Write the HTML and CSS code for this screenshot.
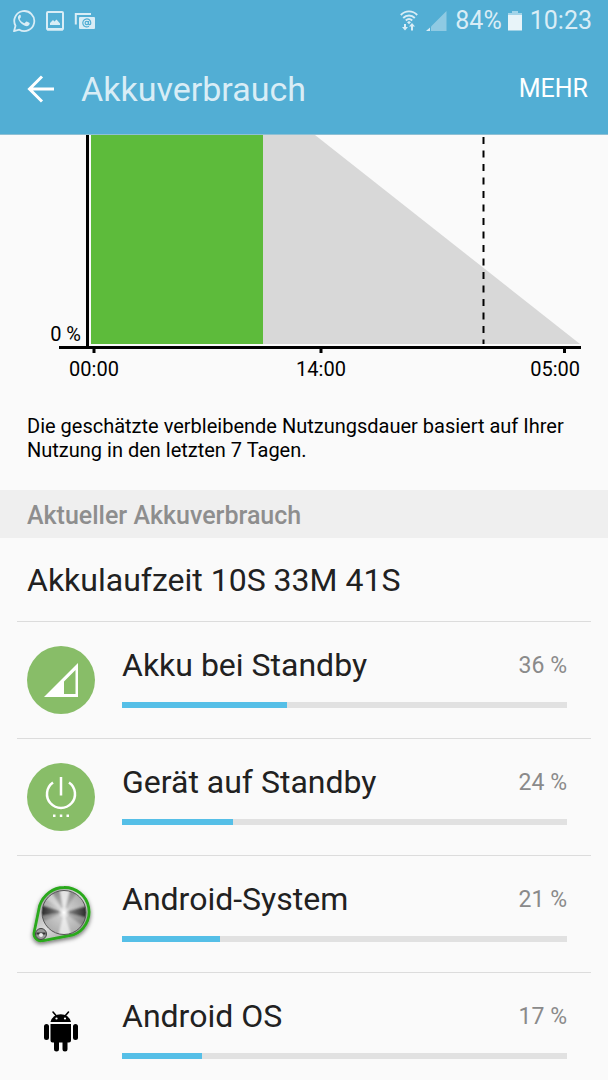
FILE: index.html
```html
<!DOCTYPE html>
<html lang="de">
<head>
<meta charset="utf-8">
<meta name="viewport" content="width=device-width, initial-scale=1">
<title>Akkuverbrauch</title>
<link rel="stylesheet" href="styles.css">
</head>
<body>
<div class="screen">
  <header class="top">
    <div class="status">
      <div class="status-group notifications">
        <svg width="24" height="24" viewBox="0 0 24 24" aria-hidden="true">
          <path d="M2 22.2 3.5 16.8A10 10 0 1 1 7.3 20.7Z" fill="none" stroke="currentColor" stroke-width="1.8" stroke-linejoin="round"/>
          <path d="M8.8 6.5c-.4-.8-.9-.8-1.500-.5-1.100.8-1.600 2.100-1.200 3.600.8 3 4 6.500 7.500 7.500 2 .5 3.600-.5 4-2 .2-.8.1-1.200-.3-1.400l-2.500-1.200c-.5-.2-.8 0-1.100.4l-.9 1.100c-.3.300-.6.300-1 .1-1.900-.9-3.200-2.100-4.100-3.800-.2-.4-.1-.6.200-.9.500-.5 1-1.100.9-1.500z" fill="currentColor"/>
        </svg>
        <svg width="20" height="22" viewBox="0 0 20 22" aria-hidden="true">
          <rect x="2" y="2" width="16" height="17.500" rx="1" fill="none" stroke="currentColor" stroke-width="2"/>
          <path d="M2 18h16v2.500H2zM5 15v-2l3-3 1.500 1.500 2-2 3.500 4V15z" fill="currentColor"/>
        </svg>
        <svg width="22" height="18" viewBox="0 0 22 18" aria-hidden="true">
          <path d="M1.800 12.500V2H17" fill="none" stroke="currentColor" stroke-width="2"/>
          <rect x="5" y="5" width="16" height="12" rx="1" fill="currentColor"/>
          <circle cx="12.800" cy="11" r="1.700" class="cutout"/>
          <path d="M14.500 9v2.500c0 1.800 2.300 1.600 2.300-.6a4 4 0 1 0-1.800 3.400" class="cutout"/>
        </svg>
      </div>
      <div class="status-group">
        <svg class="wifi" width="18" height="21" viewBox="0 0 18 21" aria-hidden="true">
          <path d="M0.800 5C5.500.2 12.500.2 17.200 5M3.200 8C6.500 4.700 11.500 4.700 14.800 8M5.800 10.500c1.900-1.800 4.500-1.800 6.400 0" fill="none" stroke="currentColor" stroke-width="1.900"/>
          <path d="m7 12.300 2-1.300 2 1.300-2 2zM6 14v3h2l-3 3.500L2 17h2v-3zM11 20.500v-4H9l3-3.500 3 3.500h-2v4z" fill="currentColor"/>
        </svg>
        <svg class="signal" width="21" height="20" viewBox="0 0 21 20" aria-hidden="true">
          <path d="M5 15.500 20.500 0v20H5z" fill="currentColor" opacity=".45"/>
          <path d="M0 20 4 16.500V20z" fill="currentColor"/>
        </svg>
        <span>84%</span>
        <svg class="battery" width="14" height="21" viewBox="0 0 14 21" aria-hidden="true">
          <path d="M0 3h4V1h6v2h4v3H0z" fill="currentColor" opacity=".6"/>
          <path d="M0 5h14v15.500H0z" fill="#e8f4f9"/>
        </svg>
        <time>10:23</time>
      </div>
    </div>
    <div class="bar">
      <button class="back" type="button" aria-label="Zurück">
        <svg width="28" height="28" viewBox="0 0 28 28" aria-hidden="true"><path d="M15 1.500 2.500 14 15 26.500M2.500 14H27" fill="none" stroke="currentColor" stroke-width="3"/></svg>
      </button>
      <h1 class="title">Akkuverbrauch</h1>
      <button class="more" type="button">MEHR</button>
    </div>
  </header>

  <main class="content">
    <svg class="chart" viewBox="0 0 608 265" role="img" aria-label="Akkustand im Zeitverlauf">
      <path d="M263 0H315L580 209H263z" fill="#d8d8d8"/>
      <rect x="91" y="0" width="172" height="209" fill="#5dbb3b"/>
      <rect x="86" y="0" width="3" height="212" fill="#000"/>
      <path d="M483.500 2V209" stroke="#000" stroke-width="2" stroke-dasharray="7 6.500"/>
      <path d="M59 212.500H581" stroke="#000" stroke-width="3"/>
      <path d="M94 213v5M321 213v5M564.500 213v5" stroke="#000" stroke-width="3"/>
      <g class="chart-text">
        <text x="81" y="206" text-anchor="end">0 %</text>
        <text x="94" y="241" text-anchor="middle">00:00</text>
        <text x="321" y="241" text-anchor="middle">14:00</text>
        <text x="580" y="241" text-anchor="end">05:00</text>
      </g>
    </svg>
    <p class="note">Die geschätzte verbleibende Nutzungsdauer basiert auf Ihrer Nutzung in den letzten 7 Tagen.</p>
    <h2 class="section">Aktueller Akkuverbrauch</h2>
    <p class="runtime">Akkulaufzeit 10S 33M 41S</p>
    <ul class="list">
      <li class="item">
        <svg class="icon" viewBox="0 0 68 68" aria-hidden="true">
          <circle cx="34" cy="34" r="34" fill="#88bd68"/>
          <path fill="#fff" fill-rule="evenodd" d="M17 51 51 17v34zM37 35.500V48h11.500V24z"/>
        </svg>
        <div class="body">
          <div class="line"><label class="name" for="p1">Akku bei Standby</label><span class="value">36 %</span></div>
          <progress class="meter" id="p1" max="100" value="37"></progress>
        </div>
      </li>
      <li class="item">
        <svg class="icon" viewBox="0 0 68 68" aria-hidden="true">
          <circle cx="34" cy="34" r="34" fill="#88bd68"/>
          <path d="M34 14v18.500M26 19.500a14 14 0 1 0 16 0" fill="none" stroke="#fff" stroke-width="2.500"/>
          <path d="M26 51.500h2.500v2.500H26zM32.800 51.500h2.500v2.500h-2.500zM39.500 51.500H42v2.500h-2.500z" fill="#fff"/>
        </svg>
        <div class="body">
          <div class="line"><label class="name" for="p2">Gerät auf Standby</label><span class="value">24 %</span></div>
          <progress class="meter" id="p2" max="100" value="25"></progress>
        </div>
      </li>
      <li class="item">
        <svg class="icon" viewBox="0 0 68 68" aria-hidden="true">
          <defs>
            <linearGradient id="plate" x1="0" y1="0" x2="1" y2="1"><stop offset="0" stop-color="#888"/><stop offset=".5" stop-color="#ddd"/><stop offset="1" stop-color="#777"/></linearGradient>
            <radialGradient id="shine"><stop offset="0" stop-color="#fff"/><stop offset=".3" stop-color="#fff" stop-opacity=".35"/><stop offset="1" stop-color="#fff" stop-opacity="0"/></radialGradient>
            <filter id="shade" x="-20%" y="-20%" width="140%" height="140%"><feDropShadow dx="0" dy="2" stdDeviation="2" flood-color="#000" flood-opacity=".55"/></filter>
            <filter id="brushed"><feGaussianBlur stdDeviation="1.300"/></filter>
            <clipPath id="dial"><circle cx="37" cy="32.500" r="22"/></clipPath>
          </defs>
          <path d="M12.500 26C16 15 26 7.500 37 7.500A24.500 24.500 0 0 1 46 55L16 60.500A7 7 0 0 1 7 53z" fill="url(#plate)" stroke="#2aa91c" stroke-width="2.800" filter="url(#shade)"/>
          <g clip-path="url(#dial)">
            <circle cx="37" cy="32.500" r="22" fill="#b0b0b0"/>
            <g filter="url(#brushed)">
              <path d="M37 32.500 10 24V37zM37 32.500 64 25V39z" fill="#333"/>
              <path d="M37 32.500 10 37V44zM37 32.500 64 39 60 49z" fill="#888"/>
              <path d="M37 32.500 22 6H32zM37 32.500 44 6H54z" fill="#909090"/>
              <path d="M37 32.500 32 6H44zM37 32.500 46 60H30z" fill="#e2e2e2"/>
              <path d="M37 32.500 10 12 20 6z" fill="#ccc"/>
            </g>
            <circle cx="37" cy="32.500" r="21" fill="url(#shine)"/>
          </g>
          <circle cx="37" cy="32.500" r="22" fill="none" stroke="#555" stroke-width="1"/>
          <circle cx="14" cy="54" r="5.500" fill="#999" stroke="#444" stroke-width="1"/>
          <path d="M9.500 53.500h9" stroke="#333" stroke-width="2"/>
          <circle cx="14" cy="55" r="2" fill="#eee"/>
        </svg>
        <div class="body">
          <div class="line"><label class="name" for="p3">Android-System</label><span class="value">21 %</span></div>
          <progress class="meter" id="p3" max="100" value="22"></progress>
        </div>
      </li>
      <li class="item">
        <svg class="icon" viewBox="0 0 68 68" aria-hidden="true">
          <path d="M23.500 25a10.500 10 0 0 1 20.500 0zM23.500 27H44v16.500a2 2 0 0 1-2 2H25.500a2 2 0 0 1-2-2z"/>
          <path d="M19.500 29.500v11M48.500 29.500v11M29.500 42v10M38 42v10" stroke="#000" stroke-width="5" stroke-linecap="round"/>
          <path d="m26 15 3 3.500M41.500 15l-3 3.500" stroke="#000" stroke-width="1.600" stroke-linecap="round"/>
          <circle cx="29.500" cy="21.500" r="1.100" fill="#fff"/><circle cx="38" cy="21.500" r="1.100" fill="#fff"/>
        </svg>
        <div class="body">
          <div class="line"><label class="name" for="p4">Android OS</label><span class="value">17 %</span></div>
          <progress class="meter" id="p4" max="100" value="18"></progress>
        </div>
      </li>
    </ul>
  </main>
</div>
</body>
</html>
```

FILE: styles.css
```css
* { box-sizing: border-box; }

body {
  margin: 0;
  background: #fafafa;
  color: #212121;
  font-family: Roboto, "Noto Sans", sans-serif;
}

.screen {
  display: flex;
  flex-direction: column;
  height: 100vh;
  overflow: hidden;
}

.top {
  flex: none;
  background: #52aed4;
  color: #d9edf6;
  border-bottom: 1px solid #8fc0d4;
}

.status {
  display: flex;
  justify-content: space-between;
  align-items: center;
  height: 41px;
  padding: 0 16px 0 12px;
  font-size: 25px;
}

.status-group {
  display: flex;
  align-items: center;
}

.notifications { gap: 9px; }
.wifi { margin-right: 8px; }
.signal { margin-right: 8px; }
.battery { margin: 0 8px 0 6px; }

.cutout {
  fill: none;
  stroke: #52aed4;
  stroke-width: 1.2;
}

.bar {
  display: flex;
  align-items: center;
  height: 93px;
  padding: 2px 20px 0 27px;
}

.back,
.more {
  padding: 0;
  border: 0;
  background: none;
  color: #fff;
  font: inherit;
}

.back {
  display: flex;
  margin-right: 26px;
}

.title {
  flex: 1;
  margin: 0;
  font-size: 34px;
  font-weight: 400;
}

.more { font-size: 25px; }

.content {
  flex: 1;
  min-height: 0;
  overflow: hidden;
}

.chart {
  display: block;
  width: 100%;
}

.chart-text {
  fill: #000;
  font-size: 20px;
}

.note {
  margin: 0;
  padding: 14px 27px 28px;
  color: #000;
  font-size: 20px;
  line-height: 24px;
}

.section {
  margin: 0;
  padding: 3px 27px 0;
  background: #efefef;
  color: #8e8e8e;
  font-size: 25px;
  font-weight: 500;
  line-height: 45px;
}

.runtime {
  margin: 0;
  padding: 1px 27px 0;
  font-size: 32px;
  line-height: 82px;
}

.list {
  margin: 0;
  padding: 0 17px;
  list-style: none;
}

.item {
  display: flex;
  align-items: center;
  gap: 27px;
  height: 117px;
  padding: 0 24px 0 10px;
  border-top: 1px solid #dcdcdc;
}

.icon {
  flex: none;
  width: 68px;
  height: 68px;
}

.body {
  flex: 1;
  padding-bottom: 6px;
}

.line {
  display: flex;
  justify-content: space-between;
  align-items: center;
  height: 38px;
}

.name { font-size: 32px; }

.value {
  color: #8a8a8a;
  font-size: 23px;
}

.meter {
  display: block;
  width: 100%;
  height: 6px;
  margin-top: 18px;
  border: 0;
  background: #e1e1e1;
  appearance: none;
}

.meter::-webkit-progress-bar { background: #e1e1e1; }
.meter::-webkit-progress-value { background: #55bfe7; }
.meter::-moz-progress-bar { background: #55bfe7; }
```
